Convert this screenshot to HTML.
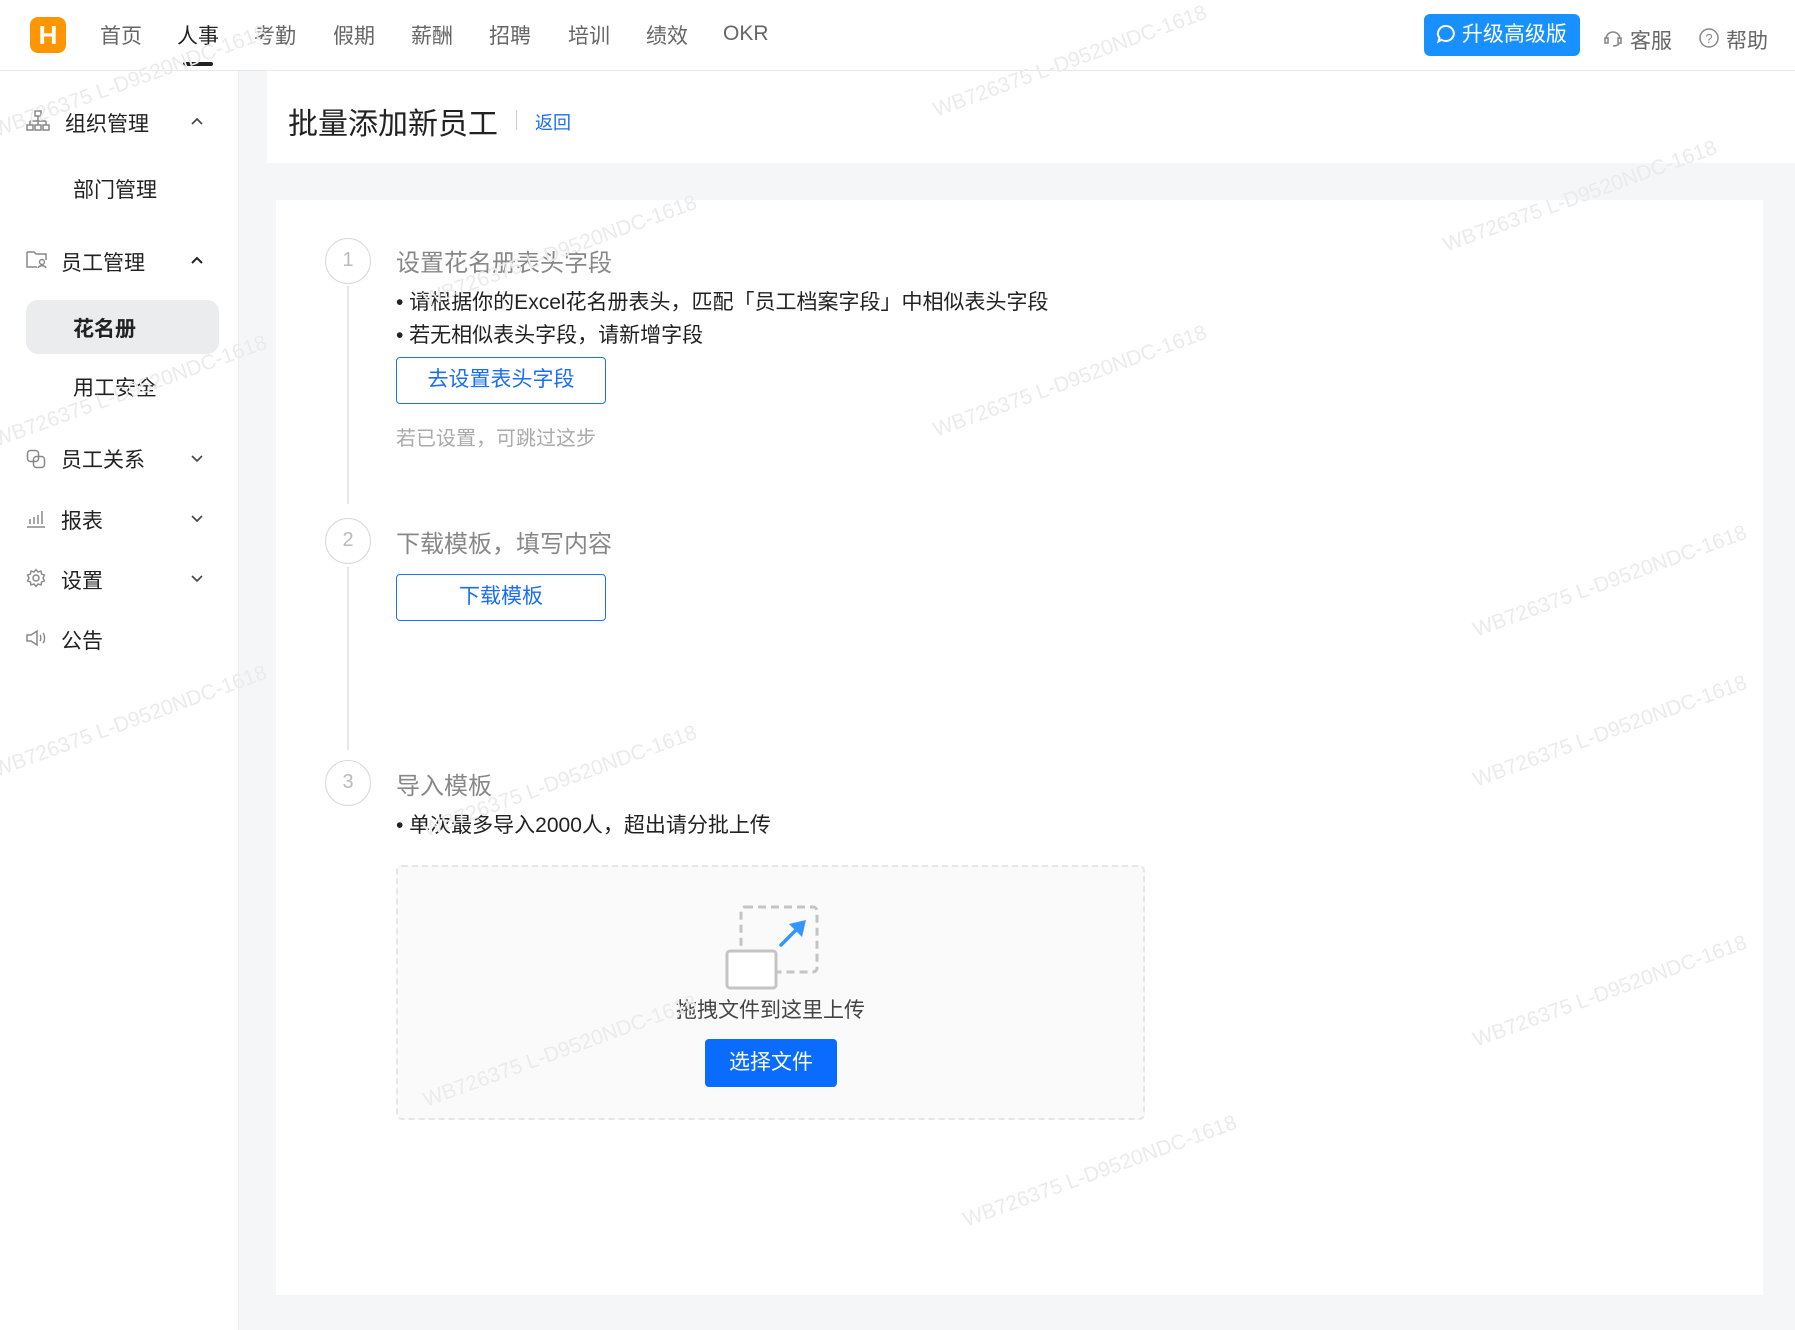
<!DOCTYPE html>
<html><head><meta charset="utf-8">
<style>
*{box-sizing:border-box;margin:0;padding:0}
body{width:1795px;height:1330px;position:relative;background:#f5f6f7;font-family:"Liberation Sans","Noto Sans CJK SC",sans-serif;overflow:hidden;color:#222}
.a{position:absolute;white-space:nowrap}
.hdr{position:absolute;left:0;top:0;width:1795px;height:71px;background:#fff;border-bottom:1px solid #e8e8e8}
.nav{font-size:21px;color:#666;top:20px}
.side{position:absolute;left:0;top:71px;width:239px;height:1259px;background:#fff;border-right:1px solid #eee}
.si{font-size:21px;color:#222}
.chev{position:absolute;left:190px}
.wm{position:absolute;color:#ebebeb;font-size:21px;transform:rotate(-20deg);transform-origin:left top;white-space:nowrap}
.circle{position:absolute;width:46px;height:46px;border:1.5px solid #d8d8d8;border-radius:50%;text-align:center;line-height:43px;color:#bbb;font-size:20px;background:#fff}
.vl{position:absolute;left:347px;width:2px;background:#e6e6e6}
.st{font-size:24px;color:#888}
.bl{font-size:21px;color:#222}
.btn{position:absolute;border:1.5px solid #1a73f5;border-radius:4px;color:#1a6ef5;font-size:21px;text-align:center;background:#fff}
</style></head><body>
<div class="hdr"></div>
<div class="a" style="left:30px;top:17px;width:36px;height:36px;background:#ff9500;border-radius:8px;color:#fff;font-weight:bold;font-size:26px;text-align:center;line-height:36px">H</div>
<div class="a nav" style="left:100px">首页</div>
<div class="a nav" style="left:177px;color:#222">人事</div>
<div class="a" style="left:183px;top:62px;width:30px;height:4px;border-radius:2px;background:#222"></div>
<div class="a nav" style="left:254px">考勤</div>
<div class="a nav" style="left:333px">假期</div>
<div class="a nav" style="left:411px">薪酬</div>
<div class="a nav" style="left:489px">招聘</div>
<div class="a nav" style="left:568px">培训</div>
<div class="a nav" style="left:646px">绩效</div>
<div class="a nav" style="left:723px;top:22px">OKR</div>
<div class="a" style="left:1424px;top:14px;width:156px;height:42px;background:#1890ff;border-radius:6px;color:#fff;font-size:21px;line-height:42px;padding-left:12px">
<svg width="20" height="20" viewBox="0 0 20 20" style="vertical-align:-3px"><path d="M10 2a8 7.5 0 1 1-4.5 13.8L2.5 17.5l1-3.6A8 7.5 0 0 1 10 2z" fill="none" stroke="#fff" stroke-width="2"/></svg> 升级高级版</div>
<svg class="a" style="left:1602px;top:27px" width="22" height="22" viewBox="0 0 22 22"><path d="M4 12a7 7 0 0 1 14 0M3 11h3v5H3zM16 11h3v5h-3zM17 16c0 2-3 3-6 3" fill="none" stroke="#888" stroke-width="1.6"/></svg>
<div class="a" style="left:1630px;top:25px;font-size:21px;color:#666">客服</div>
<svg class="a" style="left:1698px;top:27px" width="22" height="22" viewBox="0 0 22 22"><circle cx="11" cy="11" r="9" fill="none" stroke="#888" stroke-width="1.5"/><text x="11" y="16" font-size="13" text-anchor="middle" fill="#888" font-family="Liberation Sans">?</text></svg>
<div class="a" style="left:1726px;top:25px;font-size:21px;color:#666">帮助</div>

<div class="side"></div>
<svg class="a" style="left:26px;top:110px" width="24" height="22" viewBox="0 0 24 22"><rect x="9" y="1" width="6" height="5" fill="none" stroke="#888" stroke-width="1.5"/><path d="M12 6v5M4 11h16M4 11v4M12 11v4M20 11v4" stroke="#888" stroke-width="1.5" fill="none"/><rect x="1" y="15" width="6" height="5" fill="none" stroke="#888" stroke-width="1.5"/><rect x="9" y="15" width="6" height="5" fill="none" stroke="#888" stroke-width="1.5"/><rect x="17" y="15" width="6" height="5" fill="none" stroke="#888" stroke-width="1.5"/></svg>
<div class="a si" style="left:65px;top:108px">组织管理</div>
<svg class="chev" style="top:117px" width="14" height="10" viewBox="0 0 14 10"><path d="M2 7l5-5 5 5" fill="none" stroke="#444" stroke-width="1.6"/></svg>
<div class="a si" style="left:73px;top:174px">部门管理</div>
<svg class="a" style="left:26px;top:250px" width="22" height="20" viewBox="0 0 22 20"><path d="M1 2h7l2 2h10v6M1 2v15h10" fill="none" stroke="#888" stroke-width="1.5"/><circle cx="16" cy="12" r="2.5" fill="none" stroke="#888" stroke-width="1.4"/><path d="M12 18c1-3 7-3 8 0" fill="none" stroke="#888" stroke-width="1.4"/></svg>
<div class="a si" style="left:61px;top:247px">员工管理</div>
<svg class="chev" style="top:256px" width="14" height="10" viewBox="0 0 14 10"><path d="M2 7l5-5 5 5" fill="none" stroke="#222" stroke-width="2"/></svg>
<div class="a" style="left:26px;top:300px;width:193px;height:54px;background:#ebecee;border-radius:12px"></div>
<div class="a si" style="left:73px;top:313px;font-weight:bold">花名册</div>
<div class="a si" style="left:73px;top:372px">用工安全</div>
<svg class="a" style="left:26px;top:449px" width="20" height="20" viewBox="0 0 20 20"><rect x="1.5" y="1.5" width="11" height="11" rx="3" fill="none" stroke="#888" stroke-width="1.5"/><rect x="7.5" y="7.5" width="11" height="11" rx="3" fill="none" stroke="#888" stroke-width="1.5"/></svg>
<div class="a si" style="left:61px;top:444px">员工关系</div>
<svg class="chev" style="top:453px" width="14" height="10" viewBox="0 0 14 10"><path d="M2 3l5 5 5-5" fill="none" stroke="#444" stroke-width="1.6"/></svg>
<svg class="a" style="left:26px;top:508px" width="20" height="20" viewBox="0 0 20 20"><path d="M1 19h18M4 16v-5M8 16V9M12 16V7M16 16V3" stroke="#888" stroke-width="1.5"/></svg>
<div class="a si" style="left:61px;top:505px">报表</div>
<svg class="chev" style="top:513px" width="14" height="10" viewBox="0 0 14 10"><path d="M2 3l5 5 5-5" fill="none" stroke="#444" stroke-width="1.6"/></svg>
<svg class="a" style="left:26px;top:568px" width="20" height="20" viewBox="0 0 20 20"><circle cx="10" cy="10" r="3" fill="none" stroke="#888" stroke-width="1.5"/><path d="M10 1.5l2 2.5 3-1 .5 3 3 1-1.5 3 1.5 3-3 1-.5 3-3-1-2 2.5-2-2.5-3 1-.5-3-3-1 1.5-3-1.5-3 3-1 .5-3 3 1z" fill="none" stroke="#888" stroke-width="1.4"/></svg>
<div class="a si" style="left:61px;top:565px">设置</div>
<svg class="chev" style="top:573px" width="14" height="10" viewBox="0 0 14 10"><path d="M2 3l5 5 5-5" fill="none" stroke="#444" stroke-width="1.6"/></svg>
<svg class="a" style="left:26px;top:628px" width="22" height="20" viewBox="0 0 22 20"><path d="M1 7h4l6-4v14l-6-4H1z" fill="none" stroke="#888" stroke-width="1.5"/><path d="M14 7c1 1 1 5 0 6M17 5c2 2 2 8 0 10" fill="none" stroke="#888" stroke-width="1.4"/></svg>
<div class="a si" style="left:61px;top:625px">公告</div>

<div class="a" style="left:267px;top:71px;width:1528px;height:92px;background:#fff"></div>
<div class="a" style="left:288px;top:99px;font-size:30px;color:#222">批量添加新员工</div>
<div class="a" style="left:516px;top:110px;width:1px;height:20px;background:#ccc"></div>
<div class="a" style="left:535px;top:109px;font-size:18px;color:#1a6ef5">返回</div>

<div class="a" style="left:276px;top:200px;width:1487px;height:1095px;background:#fff"></div>
<div class="vl" style="top:286px;height:218px"></div>
<div class="vl" style="top:567px;height:183px"></div>
<div class="circle" style="left:325px;top:238px">1</div>
<div class="circle" style="left:325px;top:518px">2</div>
<div class="circle" style="left:325px;top:760px">3</div>
<div class="a st" style="left:396px;top:243px">设置花名册表头字段</div>
<div class="a bl" style="left:396px;top:286px">• 请根据你的Excel花名册表头，匹配「员工档案字段」中相似表头字段</div>
<div class="a bl" style="left:396px;top:319px">• 若无相似表头字段，请新增字段</div>
<div class="btn" style="left:396px;top:357px;width:210px;height:47px;line-height:44px">去设置表头字段</div>
<div class="a" style="left:396px;top:422px;font-size:20px;color:#aaa">若已设置，可跳过这步</div>
<div class="a st" style="left:396px;top:524px">下载模板，填写内容</div>
<div class="btn" style="left:396px;top:574px;width:210px;height:47px;line-height:44px">下载模板</div>
<div class="a st" style="left:396px;top:766px">导入模板</div>
<div class="a bl" style="left:396px;top:809px">• 单次最多导入2000人，超出请分批上传</div>

<div class="a" style="left:396px;top:865px;width:749px;height:255px;background:#fafafa;border:2.5px dashed #e6e6e6;border-radius:6px"></div>
<svg class="a" style="left:720px;top:900px" width="110" height="92" viewBox="720 900 110 92">
<rect x="741" y="907" width="76" height="65" rx="4" fill="none" stroke="#c4c4c4" stroke-width="3" stroke-dasharray="8 5"/>
<rect x="727" y="951" width="49" height="37" rx="3" fill="#fff" stroke="#c4c4c4" stroke-width="3"/>
<path d="M781 945l18-18" stroke="#3396ff" stroke-width="3.5" stroke-linecap="round"/>
<path d="M806 920l-4 17-13-13z" fill="#3396ff"/>
</svg>
<div class="a" style="left:676px;top:994px;font-size:21px;color:#444">拖拽文件到这里上传</div>
<div class="a" style="left:705px;top:1039px;width:132px;height:48px;background:#0a6cff;border-radius:4px;color:#fff;font-size:21px;text-align:center;line-height:48px">选择文件</div>

<div class="wm" style="left:-10px;top:120px">WB726375 L-D9520NDC-1618</div>
<div class="wm" style="left:-10px;top:430px">WB726375 L-D9520NDC-1618</div>
<div class="wm" style="left:-10px;top:760px">WB726375 L-D9520NDC-1618</div>
<div class="wm" style="left:420px;top:290px">WB726375 L-D9520NDC-1618</div>
<div class="wm" style="left:420px;top:820px">WB726375 L-D9520NDC-1618</div>
<div class="wm" style="left:420px;top:1090px">WB726375 L-D9520NDC-1618</div>
<div class="wm" style="left:930px;top:100px">WB726375 L-D9520NDC-1618</div>
<div class="wm" style="left:930px;top:420px">WB726375 L-D9520NDC-1618</div>
<div class="wm" style="left:960px;top:1210px">WB726375 L-D9520NDC-1618</div>
<div class="wm" style="left:1440px;top:235px">WB726375 L-D9520NDC-1618</div>
<div class="wm" style="left:1470px;top:620px">WB726375 L-D9520NDC-1618</div>
<div class="wm" style="left:1470px;top:770px">WB726375 L-D9520NDC-1618</div>
<div class="wm" style="left:1470px;top:1030px">WB726375 L-D9520NDC-1618</div>
</body></html>
